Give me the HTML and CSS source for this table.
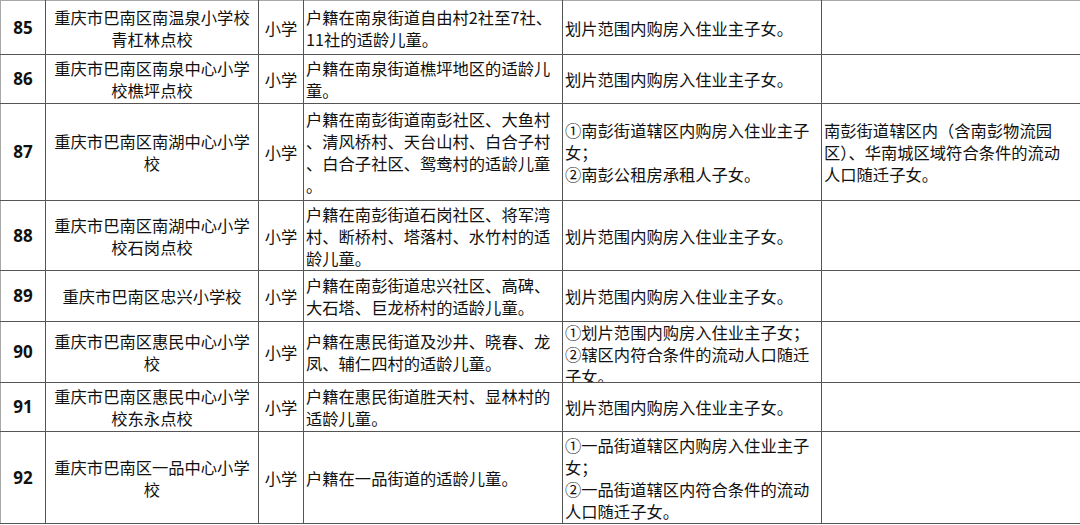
FILE: index.html
```html
<!DOCTYPE html>
<html lang="zh-CN">
<head>
<meta charset="utf-8">
<title>巴南区小学划片</title>
<link rel="stylesheet" href="styles.css">
</head>
<body>
<table class="sheet">
  <colgroup>
    <col class="w-no"><col class="w-school"><col class="w-type"><col class="w-area"><col class="w-cond"><col class="w-note">
  </colgroup>
  <tbody>
    <tr class="r85 bt-light">
      <td class="no">85</td>
      <td class="school">重庆市巴南区南温泉小学校<br>青杠林点校</td>
      <td class="type">小学</td>
      <td class="txt">户籍在南泉街道自由村2社至7社、<br>11社的适龄儿童。</td>
      <td class="txt">划片范围内购房入住业主子女。</td>
      <td class="txt"></td>
    </tr>
    <tr class="r86">
      <td class="no">86</td>
      <td class="school">重庆市巴南区南泉中心小学<br>校樵坪点校</td>
      <td class="type">小学</td>
      <td class="txt">户籍在南泉街道樵坪地区的适龄儿<br>童。</td>
      <td class="txt">划片范围内购房入住业主子女。</td>
      <td class="txt"></td>
    </tr>
    <tr class="r87">
      <td class="no">87</td>
      <td class="school">重庆市巴南区南湖中心小学<br>校</td>
      <td class="type">小学</td>
      <td class="txt">户籍在南彭街道南彭社区、大鱼村<br>、清风桥村、天台山村、白合子村<br>、白合子社区、鸳鸯村的适龄儿童<br>。</td>
      <td class="txt">①南彭街道辖区内购房入住业主子<br>女；<br>②南彭公租房承租人子女。</td>
      <td class="txt">南彭街道辖区内（含南彭物流园<br>区）、华南城区域符合条件的流动<br>人口随迁子女。</td>
    </tr>
    <tr class="r88">
      <td class="no">88</td>
      <td class="school">重庆市巴南区南湖中心小学<br>校石岗点校</td>
      <td class="type">小学</td>
      <td class="txt">户籍在南彭街道石岗社区、将军湾<br>村、断桥村、塔落村、水竹村的适<br>龄儿童。</td>
      <td class="txt">划片范围内购房入住业主子女。</td>
      <td class="txt"></td>
    </tr>
    <tr class="r89 bt-light">
      <td class="no">89</td>
      <td class="school">重庆市巴南区忠兴小学校</td>
      <td class="type">小学</td>
      <td class="txt">户籍在南彭街道忠兴社区、高碑、<br>大石塔、巨龙桥村的适龄儿童。</td>
      <td class="txt">划片范围内购房入住业主子女。</td>
      <td class="txt"></td>
    </tr>
    <tr class="r90">
      <td class="no">90</td>
      <td class="school">重庆市巴南区惠民中心小学<br>校</td>
      <td class="type">小学</td>
      <td class="txt">户籍在惠民街道及沙井、晓春、龙<br>凤、辅仁四村的适龄儿童。</td>
      <td class="txt"><div class="clip">①划片范围内购房入住业主子女；<br>②辖区内符合条件的流动人口随迁<br>子女。</div></td>
      <td class="txt"></td>
    </tr>
    <tr class="r91 bt-light">
      <td class="no">91</td>
      <td class="school">重庆市巴南区惠民中心小学<br>校东永点校</td>
      <td class="type">小学</td>
      <td class="txt">户籍在惠民街道胜天村、显林村的<br>适龄儿童。</td>
      <td class="txt">划片范围内购房入住业主子女。</td>
      <td class="txt"></td>
    </tr>
    <tr class="r92 bt-light">
      <td class="no">92</td>
      <td class="school">重庆市巴南区一品中心小学<br>校</td>
      <td class="type">小学</td>
      <td class="txt">户籍在一品街道的适龄儿童。</td>
      <td class="txt">①一品街道辖区内购房入住业主子<br>女；<br>②一品街道辖区内符合条件的流动<br>人口随迁子女。</td>
      <td class="txt"></td>
    </tr>
  </tbody>
</table>
</body>
</html>
```

FILE: styles.css
```css
html, body {
  margin: 0;
  padding: 0;
  background: #ffffff;
}

body {
  font-family: "Noto Sans CJK SC", "Noto Sans", sans-serif;
  color: #111111;
  overflow: hidden;
}

.sheet {
  border-collapse: collapse;
  table-layout: fixed;
  width: 1080px;
  border-top: 1px solid #a8a8a8;
  border-left: 1px solid #a8a8a8;
  border-right: 1px solid #555555;
  border-bottom: 1px solid #555555;
}

.w-no { width: 45px; }
.w-school { width: 213px; }
.w-type { width: 45px; }
.w-area { width: 259px; }
.w-cond { width: 259px; }
.w-note { width: 259px; }

.sheet td {
  border: 1px solid #555555;
  padding: 0 0 0 2px;
  vertical-align: middle;
  font-size: 16.3px;
  line-height: 22px;
  white-space: nowrap;
  overflow: hidden;
}

.sheet tr.bt-light td {
  border-top-color: #9a9a9a;
}

.sheet tr.r85 td { border-top-color: #a8a8a8; }

.sheet td:first-child { border-left-color: #a8a8a8; }
.sheet td:last-child { border-right-color: #555555; }

.r85 { height: 54px; }
.r86 { height: 49px; }
.r87 { height: 97px; }
.r88 { height: 70px; }
.r89 { height: 51px; }
.r90 { height: 61px; }
.r91 { height: 49px; }
.r92 { height: 92px; }

.sheet td.no {
  text-align: center;
  padding: 0;
  font-family: "Noto Sans", "Open Sans", sans-serif;
  font-weight: 700;
  font-size: 17px;
  color: #111111;
}

.sheet td.school {
  text-align: center;
  padding: 0;
}

.sheet td.type {
  text-align: center;
  padding: 0;
}

.sheet td.txt {
  text-align: left;
  padding-left: 2px;
}

.clip {
  height: 60px;
  overflow: hidden;
  display: flex;
  flex-direction: column;
  justify-content: center;
  padding-top: 4px;
  box-sizing: border-box;
}
```
